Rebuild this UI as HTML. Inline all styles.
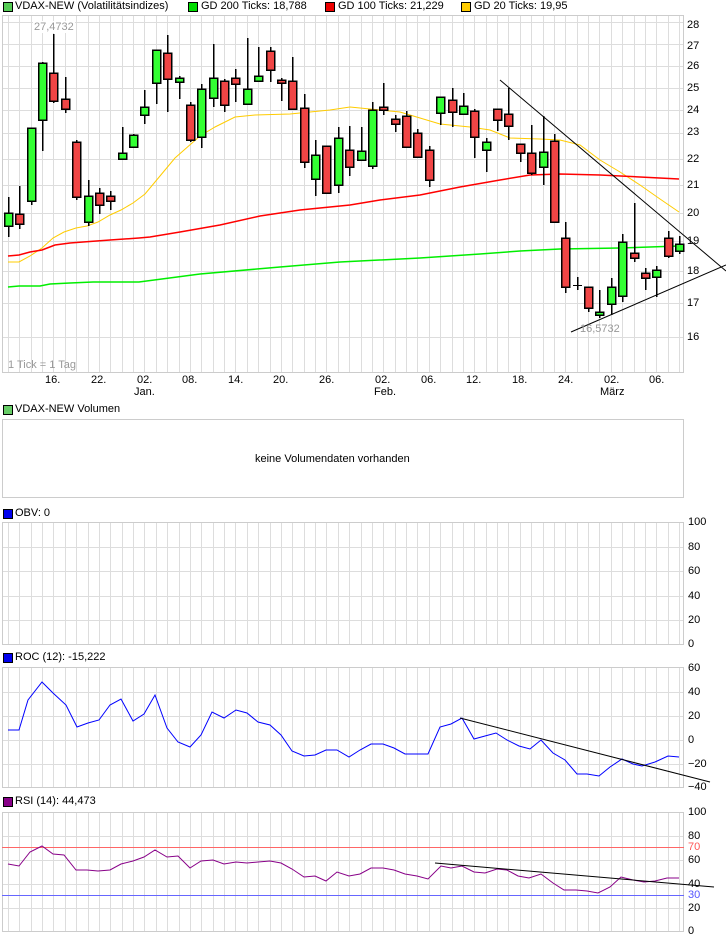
<!DOCTYPE html>
<html><head><meta charset="utf-8">
<style>
html,body{margin:0;padding:0;background:#fff;}
body{width:726px;height:940px;position:relative;overflow:hidden;font-family:"Liberation Sans",sans-serif;font-size:11px;color:#000;}
.t{position:absolute;white-space:nowrap;line-height:12px;}
.sq{position:absolute;width:8px;height:8px;border:1px solid #000;}
</style></head><body>
<svg id="s" width="726" height="940" style="position:absolute;left:0;top:0" shape-rendering="crispEdges"></svg>

<div class="sq" style="left:3px;top:2px;background:#5c5"></div><div class="t" style="left:15px;top:0px">VDAX-NEW (Volatilitätsindizes)</div>
<div class="sq" style="left:188px;top:2px;background:#0d0"></div><div class="t" style="left:201px;top:0px">GD 200 Ticks: 18,788</div>
<div class="sq" style="left:325px;top:2px;background:#e00"></div><div class="t" style="left:338px;top:0px">GD 100 Ticks: 21,229</div>
<div class="sq" style="left:461px;top:2px;background:#fc0"></div><div class="t" style="left:474px;top:0px">GD 20 Ticks: 19,95</div>

<div class="t" style="left:33px;top:21px;color:#999;background:#fff;padding:0 1px">27,4732</div>
<div class="t" style="left:580px;top:323px;color:#999;">16,5732</div>
<div class="t" style="left:8px;top:359px;color:#999;">1 Tick = 1 Tag</div>

<div class="t" style="left:687px;top:19px">28</div>
<div class="t" style="left:687px;top:40px">27</div>
<div class="t" style="left:687px;top:60px">26</div>
<div class="t" style="left:687px;top:82px">25</div>
<div class="t" style="left:687px;top:104px">24</div>
<div class="t" style="left:687px;top:126px">23</div>
<div class="t" style="left:687px;top:153px">22</div>
<div class="t" style="left:687px;top:179px">21</div>
<div class="t" style="left:687px;top:207px">20</div>
<div class="t" style="left:687px;top:235px">19</div>
<div class="t" style="left:687px;top:265px">18</div>
<div class="t" style="left:687px;top:297px">17</div>
<div class="t" style="left:687px;top:331px">16</div>

<div class="t" style="left:45px;top:374px">16.</div>
<div class="t" style="left:91px;top:374px">22.</div>
<div class="t" style="left:137px;top:374px">02.</div><div class="t" style="left:134px;top:386px">Jan.</div>
<div class="t" style="left:182px;top:374px">08.</div>
<div class="t" style="left:228px;top:374px">14.</div>
<div class="t" style="left:273px;top:374px">20.</div>
<div class="t" style="left:319px;top:374px">26.</div>
<div class="t" style="left:375px;top:374px">02.</div><div class="t" style="left:374px;top:386px">Feb.</div>
<div class="t" style="left:421px;top:374px">06.</div>
<div class="t" style="left:466px;top:374px">12.</div>
<div class="t" style="left:512px;top:374px">18.</div>
<div class="t" style="left:558px;top:374px">24.</div>
<div class="t" style="left:604px;top:374px">02.</div><div class="t" style="left:600px;top:386px">März</div>
<div class="t" style="left:649px;top:374px">06.</div>

<div class="sq" style="left:3px;top:405px;background:#6c6"></div><div class="t" style="left:15px;top:403px">VDAX-NEW Volumen</div>
<div class="t" style="left:255px;top:453px">keine Volumendaten vorhanden</div>

<div class="sq" style="left:3px;top:509px;background:#00e"></div><div class="t" style="left:15px;top:507px">OBV: 0</div>
<div class="t" style="left:688px;top:516px">100</div>
<div class="t" style="left:688px;top:541px">80</div>
<div class="t" style="left:688px;top:565px">60</div>
<div class="t" style="left:688px;top:590px">40</div>
<div class="t" style="left:688px;top:614px">20</div>
<div class="t" style="left:688px;top:638px">0</div>

<div class="sq" style="left:3px;top:653px;background:#00e"></div><div class="t" style="left:15px;top:651px">ROC (12): -15,222</div>
<div class="t" style="left:688px;top:662px">60</div>
<div class="t" style="left:688px;top:686px">40</div>
<div class="t" style="left:688px;top:710px">20</div>
<div class="t" style="left:688px;top:734px">0</div>
<div class="t" style="left:688px;top:758px">−20</div>
<div class="t" style="left:688px;top:781px">−40</div>

<div class="sq" style="left:3px;top:797px;background:#808"></div><div class="t" style="left:15px;top:795px">RSI (14): 44,473</div>
<div class="t" style="left:688px;top:806px">100</div>
<div class="t" style="left:688px;top:830px">80</div>
<div class="t" style="left:688px;top:841px;color:#f55">70</div>
<div class="t" style="left:688px;top:854px">60</div>
<div class="t" style="left:688px;top:878px">40</div>
<div class="t" style="left:688px;top:889px;color:#55f">30</div>
<div class="t" style="left:688px;top:902px">20</div>
<div class="t" style="left:688px;top:925px">0</div>

<script>
var s=document.getElementById('s'),h='';
function X(i){return Math.round(8+i*11.373);}
function panel(t,b,rows){
  for(var i=0;i<60;i++)h+='<line x1="'+(X(i)+.5)+'" y1="'+t+'" x2="'+(X(i)+.5)+'" y2="'+b+'" stroke="#ddd"/>';
  rows.forEach(function(y){h+='<line x1="2" y1="'+(y+.5)+'" x2="684" y2="'+(y+.5)+'" stroke="#ddd"/>';});
  h+='<rect x="2.5" y="'+(t+.5)+'" width="681" height="'+(b-t)+'" fill="none" stroke="#ccc"/>';
}
panel(15,372,[22,44,66,88,110,133,159,185,213,241,271,303,337]);
h+='<rect x="2.5" y="419.5" width="681" height="78" fill="none" stroke="#ccc"/>';
panel(522,644,[547,571,596,620]);
panel(667,787,[692,716,740,764]);
panel(812,931,[836,860,884,908]);
function pl(pts,c,w){h+='<polyline fill="none" stroke="'+c+'" stroke-width="'+(w||1)+'" shape-rendering="auto" points="'+pts+'"/>';}
pl('8,262 19,262 30,256 42,248 53,238 64,232 76,228 87,226 98,222 110,215 121,210 133,203 145,194 155,182 175,158 200,136 215,127 235,117 255,115 290,114 330,110 350,107 380,110 400,112 420,118 440,124 470,127 490,130 510,138 540,139 560,140 580,145 600,160 620,172 640,185 660,199 679,212','#fc0');
pl('8,256 19,255 30,252 42,250 55,245 70,243 83,242 110,240 139,238 150,237 180,232 220,225 260,216 300,210 350,205 380,200 420,195 460,187 500,180 530,175 560,174 600,175 640,177 679,179','#f00',1.5);
pl('8,287 19,286 40,286 50,284 70,283 93,282 139,282 200,274 280,267 340,262 420,258 480,254 520,251 560,249 620,248 679,246','#0e0',1.5);
var c=[
[213,226,197,237,'g'],[214,224,186,229,'r'],[128,201,128,205,'g'],[63,120,62,151,'g'],[73,101,34,103,'r'],[99,109,77,113,'r'],[142,197,140,200,'r'],[196,222,180,226,'g'],[193,205,188,214,'r'],[196,201,191,210,'r'],
[153,159,127,159,'g'],[135,147,134,147,'g'],[107,115,90,124,'g'],[50,83,50,104,'g'],[53,79,35,112,'r'],[78,82,76,99,'g'],[105,140,102,142,'r'],[89,137,84,148,'g'],[78,98,44,107,'g'],[81,105,79,112,'r'],
[78,84,69,102,'r'],[89,104,38,105,'g'],[76,81,47,81,'g'],[51,70,47,82,'r'],[80,82,78,101,'r'],[81,109,57,110,'r'],[108,162,94,168,'r'],[155,179,140,196,'g'],[146,193,146,193,'r'],[138,185,127,193,'g'],
[150,167,126,176,'r'],[151,160,127,160,'g'],[110,166,102,169,'g'],[107,109,83,115,'r'],[119,124,115,132,'r'],[116,147,111,147,'r'],[133,157,129,157,'r'],[150,180,146,187,'r'],[97,113,97,125,'g'],[100,112,88,127,'r'],
[106,114,93,114,'g'],[111,137,109,158,'r'],[142,150,138,172,'g'],[109,120,109,131,'r'],[114,126,88,140,'r'],[144,153,144,162,'r'],[153,173,125,175,'r'],[152,167,116,185,'g'],[141,222,134,223,'r'],[238,287,222,293,'r'],
[285,286,277,290,'k'],[287,308,287,312,'r'],[312,315,290,318,'g'],[287,304,278,315,'g'],[242,296,234,302,'g'],[253,258,203,262,'r'],[273,278,268,290,'r'],[270,277,266,297,'g'],[238,256,231,258,'r'],[244,251,236,254,'g']];
c.forEach(function(d,i){var x=X(i);
  h+='<line x1="'+(x+.5)+'" y1="'+d[2]+'" x2="'+(x+.5)+'" y2="'+d[3]+'" stroke="#000" stroke-width="1.5"/>';
  if(d[4]=='k')h+='<line x1="'+(x-4)+'" y1="'+(d[0]+.5)+'" x2="'+(x+5)+'" y2="'+(d[0]+.5)+'" stroke="#000"/>';
  else h+='<rect x="'+(x-3.5)+'" y="'+d[0]+'" width="8" height="'+Math.max(3,d[1]-d[0])+'" fill="'+(d[4]=='g'?'#3f3':'#f04545')+'" stroke="#000" stroke-width="1.5"/>';
});
h+='<line x1="500" y1="80" x2="726" y2="271" stroke="#000" shape-rendering="auto"/>';
h+='<line x1="571" y1="332" x2="726" y2="265" stroke="#000" shape-rendering="auto"/>';
pl('8,730 19,730 28,700 42,682 53,693 66,705 77,727 88,723 99,720 110,705 121,699 133,721 144,714 155,695 167,728 178,742 190,747 201,735 212,712 224,718 236,710 247,713 258,722 270,725 281,735 292,751 304,756 315,755 326,750 337,750 349,757 360,750 371,744 383,744 394,748 405,754 416,754 428,754 440,727 451,724 462,718 474,739 485,736 496,733 507,740 519,746 530,749 541,740 553,753 565,760 577,774 587,774 599,776 610,767 622,759 633,764 642,766 655,762 668,756 679,757','#00f');
h+='<line x1="460" y1="718" x2="710" y2="782" stroke="#000" shape-rendering="auto"/>';
h+='<line x1="2" y1="847.5" x2="684" y2="847.5" stroke="#f66"/>';
h+='<line x1="2" y1="895.5" x2="684" y2="895.5" stroke="#66f"/>';
pl('8,864 19,866 30,852 42,846 53,854 64,855 76,870 87,870 98,871 110,870 121,864 133,861 144,857 155,850 167,857 178,856 190,868 201,861 213,860 224,864 236,862 247,863 258,862 270,861 281,863 292,869 304,877 315,876 326,881 337,872 349,876 360,874 371,868 383,868 394,870 405,874 417,876 428,879 441,866 451,868 462,866 474,872 485,873 497,869 507,870 518,876 529,878 541,874 553,883 564,890 576,890 587,891 598,893 610,887 621,877 633,880 644,882 655,881 667,878 679,878','#808');
h+='<line x1="435" y1="863" x2="714" y2="887" stroke="#000" shape-rendering="auto"/>';
s.innerHTML=h;
</script>
</body></html>
